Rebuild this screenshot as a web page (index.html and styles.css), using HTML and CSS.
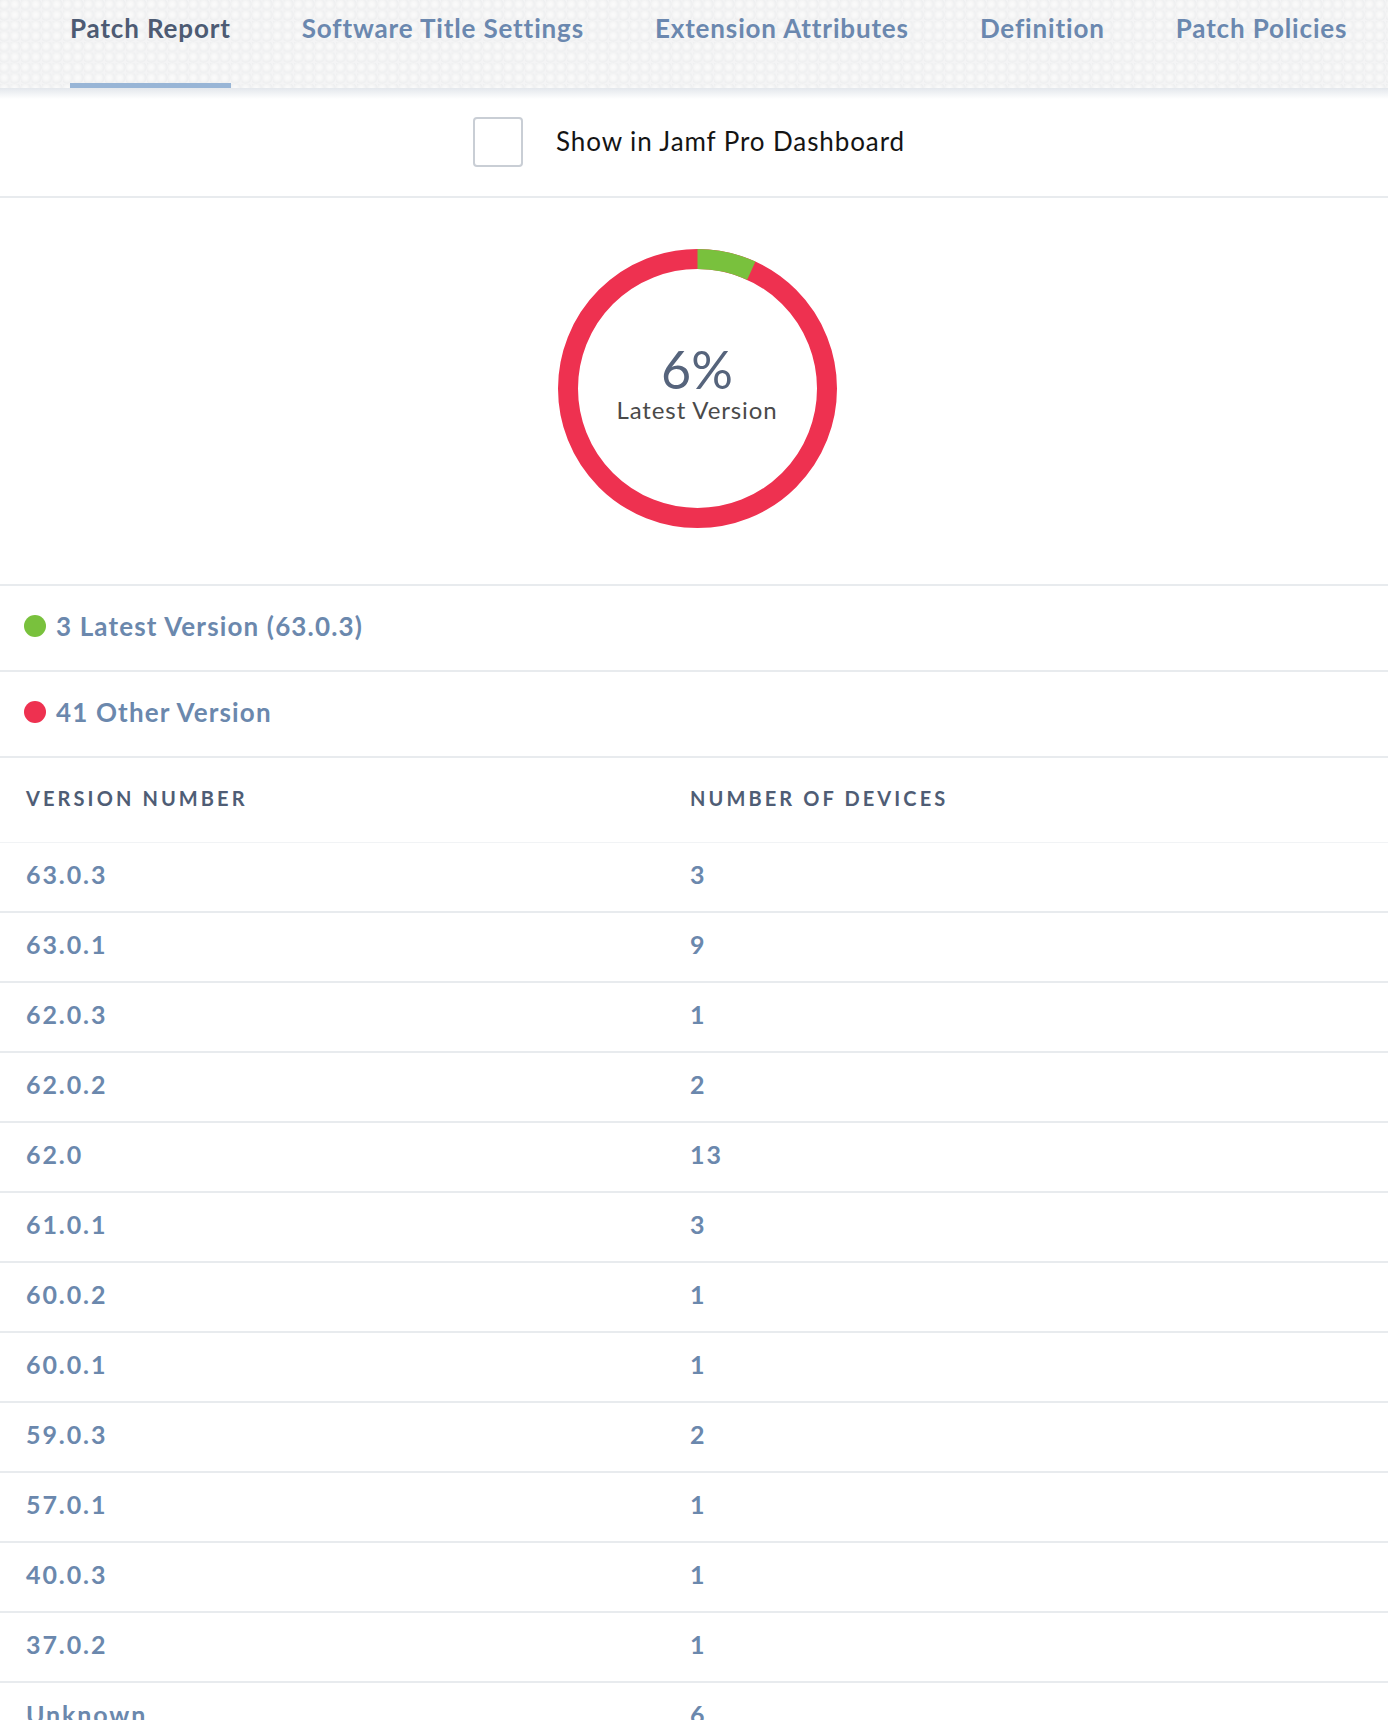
FILE: index.html
```html
<!DOCTYPE html>
<html lang="en">
<head>
  <meta charset="UTF-8" />
  <title>Patch Report</title>
  <link rel="stylesheet" href="styles.css">
</head>
<body>

  <!-- Pestañas -->
  <nav class="tabs">
    <a class="tab active">Patch Report</a>
    <a class="tab">Software Title Settings</a>
    <a class="tab">Extension Attributes</a>
    <a class="tab">Definition</a>
    <a class="tab">Patch Policies</a>
  </nav>

  <div class="dashboard-row">
    <span class="checkbox"></span>
    <span class="checkbox-label">Show in Jamf Pro Dashboard</span>
  </div>

  <!-- Gráfico -->
  <section class="chart">
    <div class="donut">
      <svg width="279" height="279" viewBox="0 0 279 279">
        <circle cx="139.5" cy="139.5" r="129.5" fill="none" stroke="#ee3150" stroke-width="20" />
        <circle cx="139.5" cy="139.5" r="129.5" fill="none" stroke="#79c13d" stroke-width="20"
                stroke-dasharray="55.5 900" transform="rotate(-90 139.5 139.5)" />
      </svg>
      <div class="donut-label">
        <div class="donut-pct">6%</div>
        <div class="donut-text">Latest Version</div>
      </div>
    </div>
  </section>

  <div class="legend-row"><span class="dot green"></span>3 Latest Version (63.0.3)</div>
  <div class="legend-row"><span class="dot red"></span>41 Other Version</div>

  <table class="versions">
    <thead>
      <tr><th>Version Number</th><th>Number of Devices</th></tr>
    </thead>
    <tbody>
      <tr><td>63.0.3</td><td>3</td></tr>
      <tr><td>63.0.1</td><td>9</td></tr>
      <tr><td>62.0.3</td><td>1</td></tr>
      <tr><td>62.0.2</td><td>2</td></tr>
      <tr><td>62.0</td><td>13</td></tr>
      <tr><td>61.0.1</td><td>3</td></tr>
      <tr><td>60.0.2</td><td>1</td></tr>
      <tr><td>60.0.1</td><td>1</td></tr>
      <tr><td>59.0.3</td><td>2</td></tr>
      <tr><td>57.0.1</td><td>1</td></tr>
      <tr><td>40.0.3</td><td>1</td></tr>
      <tr><td>37.0.2</td><td>1</td></tr>
      <tr><td>Unknown</td><td>6</td></tr>
    </tbody>
  </table>

</body>
</html>
```

FILE: styles.css
```css
body {
  margin: 0;
  font-family: Lato, "Open Sans", sans-serif;
  background-color: #fff;
  overflow: hidden;
}
.tabs {
  display: flex;
  gap: 71px;
  height: 88px;
  padding-left: 70px;
  box-sizing: border-box;
  background-color: #f4f4f5;
  background-image: radial-gradient(circle at 40% 40%, #fbfbfb 0, #f7f7f7 30%, #eeeff0 62%, #f4f4f5 72%);
  background-size: 10.5px 10.5px;
  position: relative;
}
.tabs::after {
  content: "";
  position: absolute;
  left: 0;
  right: 0;
  top: 88px;
  height: 11px;
  background: linear-gradient(#e3e7ec, rgba(255, 255, 255, 0));
}
.tab {
  display: block;
  height: 88px;
  padding-top: 13px;
  box-sizing: border-box;
  font-size: 26px;
  line-height: 30px;
  font-weight: 700;
  letter-spacing: 0.85px;
  color: #6b88af;
  border-bottom: 5px solid transparent;
  cursor: pointer;
  white-space: nowrap;
}
.tab.active {
  color: #4d5b73;
  border-bottom-color: #98b5d6;
}
.dashboard-row {
  display: flex;
  align-items: center;
  justify-content: center;
  gap: 33px;
  height: 108px;
  border-bottom: 2px solid #e8ebee;
  padding-right: 10px;
}
.checkbox {
  width: 50px;
  height: 50px;
  box-sizing: border-box;
  border: 2px solid #c9ced5;
  border-radius: 4px;
  background: #fff;
}
.checkbox-label {
  font-size: 26px;
  letter-spacing: 0.9px;
  color: #141414;
  margin-top: -2px;
}
.chart {
  display: flex;
  justify-content: center;
  padding: 51px 0 56px 6px;
  border-bottom: 2px solid #e8ebee;
}
.donut {
  position: relative;
  width: 279px;
  height: 279px;
}
.donut svg {
  display: block;
}
.donut-label {
  position: absolute;
  left: 0;
  right: 0;
  top: 92px;
  text-align: center;
}
.donut-pct {
  font-size: 52px;
  line-height: 56px;
  color: #56647c;
}
.donut-text {
  font-size: 24px;
  line-height: 26px;
  letter-spacing: 0.9px;
  color: #4a4a4a;
}
.legend-row {
  display: flex;
  align-items: center;
  gap: 10px;
  height: 86px;
  padding-left: 24px;
  padding-bottom: 4px;
  box-sizing: border-box;
  border-bottom: 2px solid #e8ebee;
  font-size: 26px;
  font-weight: 700;
  letter-spacing: 1.15px;
  color: #6b88ad;
}
.dot {
  width: 22px;
  height: 22px;
  border-radius: 50%;
  margin-top: -1px;
}
.dot.green {
  background-color: #79c13d;
}
.dot.red {
  background-color: #ee3150;
}
.versions {
  width: 100%;
  border-collapse: collapse;
}
.versions th {
  height: 80px;
  padding: 0 0 4px 26px;
  text-align: left;
  font-size: 20px;
  font-weight: 700;
  letter-spacing: 3.1px;
  text-transform: uppercase;
  color: #4f5d75;
  border-bottom: 1px solid #f1f3f5;
}
.versions th:first-child {
  width: 638px;
}
.versions td {
  height: 62px;
  padding: 0 0 6px 26px;
  font-size: 25px;
  font-weight: 700;
  letter-spacing: 1.9px;
  color: #6b88ad;
  border-bottom: 2px solid #e8ebee;
}
```
